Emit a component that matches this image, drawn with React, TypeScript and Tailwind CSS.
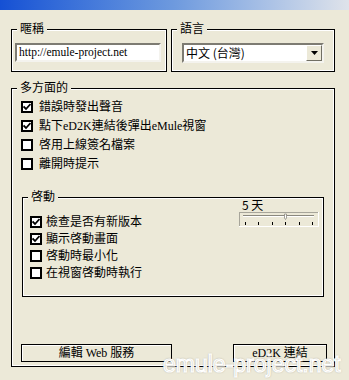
import React from 'react';

const FONT = { fontFamily: '"Liberation Serif", "Noto Sans CJK TC", serif' };

// classic group box: etched black line with the caption sitting on it
const GroupBox: React.FC<{ title: string; className?: string; children?: React.ReactNode }> = ({
  title,
  className = '',
  children,
}) => (
  <div className={'relative border border-black shadow-[inset_0_0_0_1px_#fff] ' + className}>
    <span className="absolute -top-[8px] left-[5px] bg-[#ece9d8] px-[3px] text-[12px] leading-[14px] text-black">
      {title}
    </span>
    {children}
  </div>
);

const CheckBox: React.FC<{ checked?: boolean; label: string; gap: string }> = ({ checked, label, gap }) => (
  <div className={'flex items-center ' + gap}>
    <div className="w-[12px] h-[12px] border-2 border-black bg-white flex items-center justify-center shrink-0">
      {checked && (
        <svg width="8" height="8" viewBox="0 0 8 8">
          <path d="M0.5 3.5 L3 6 L7.5 1" stroke="#000" strokeWidth="1.8" fill="none" />
        </svg>
      )}
    </div>
    <span className="text-[12px] leading-[14px] text-black whitespace-nowrap">{label}</span>
  </div>
);

const Slider: React.FC = () => (
  <svg width="80" height="15" viewBox="0 0 80 15" className="block">
    <rect x="0.5" y="0.5" width="79" height="14" fill="none" stroke="#a7a59a" />
    <line x1="0" y1="14.5" x2="80" y2="14.5" stroke="#fff" />
    <line x1="79.5" y1="0" x2="79.5" y2="15" stroke="#fff" />
    {/* track */}
    <line x1="4" y1="3.5" x2="75" y2="3.5" stroke="#8a887e" />
    <line x1="4" y1="4.5" x2="75" y2="4.5" stroke="#fff" />
    {/* thumb */}
    <path d="M45.5 2 L47.5 2 L47.5 6 L46.5 7.5 L45.5 6 Z" fill="#fff" stroke="#8a887e" strokeWidth="0.8" />
    {[6, 19, 33, 46, 60, 73].map((x) => (
      <line key={x} x1={x + 0.5} y1="10" x2={x + 0.5} y2="13" stroke="#000" />
    ))}
  </svg>
);

const Button: React.FC<{ label: string; width: string }> = ({ label, width }) => (
  <div
    className={
      'h-[18px] border border-black shadow-[inset_1px_1px_0_#fff] bg-[#ece9d8] flex items-center justify-center text-[12px] leading-[14px] text-black ' +
      width
    }
  >
    {label}
  </div>
);

const App: React.FC = () => {
  return (
    <div className="relative w-[349px] h-[380px] bg-[#ece9d8] overflow-hidden select-none" style={FONT}>
      {/* title bar strip */}
      <div className="h-[10px] bg-linear-to-r from-[#1550d4] via-[#6e9ade] to-[#dfe3ea]" />

      <div className="pl-[11px] flex flex-col">
        {/* top row */}
        <div className="mt-[19px] flex gap-[4px]">
          <GroupBox title="暱稱" className="w-[156px] h-[43px] pt-[13px] pl-[3px]">
            <div className="w-[146px] h-[19px] bg-white border-2 border-t-[#7d7b72] border-l-[#7d7b72] border-b-[#f4f3ee] border-r-[#f4f3ee] flex items-center pl-[2px]">
              <span className="text-[11.5px] leading-[13px] text-black">http://emule-project.net</span>
            </div>
          </GroupBox>
          <GroupBox title="語言" className="w-[164px] h-[43px] pt-[13px] pl-[10px]">
            <div className="w-[142px] h-[20px] bg-white border-2 border-t-[#7d7b72] border-l-[#7d7b72] border-b-[#f4f3ee] border-r-[#f4f3ee] flex items-center">
              <span className="pl-[2px] text-[12px] leading-[14px] text-black flex-1" style={{ fontFamily: '"Noto Sans CJK TC", sans-serif' }}>
                中文 (台灣)
              </span>
              <div className="w-[16px] h-[16px] bg-[#ece9d8] border border-t-white border-l-white border-b-[#716f64] border-r-[#716f64] flex items-center justify-center">
                <svg width="7" height="4" viewBox="0 0 7 4">
                  <path d="M0 0 H7 L3.5 4 Z" fill="#000" />
                </svg>
              </div>
            </div>
          </GroupBox>
        </div>

        {/* 多方面的 */}
        <GroupBox title="多方面的" className="mt-[16px] w-[324px] h-[279px] flex flex-col pb-[4px]">
          <div className="pt-[8px] pl-[9px] flex flex-col">
            {[
              { c: true, t: '錯誤時發出聲音' },
              { c: true, t: '點下eD2K連結後彈出eMule視窗' },
              { c: false, t: '啓用上線簽名檔案' },
              { c: false, t: '離開時提示' },
            ].map((r) => (
              <div key={r.t} className="h-[19px] flex items-center">
                <CheckBox checked={r.c} label={r.t} gap="gap-[6px]" />
              </div>
            ))}
          </div>

          <GroupBox title="啓動" className="ml-[10px] mt-[24px] w-[302px] h-[100px] flex justify-between">
            <div className="pt-[15px] pl-[7px] flex flex-col">
              {[
                { c: true, t: '檢查是否有新版本' },
                { c: true, t: '顯示啓動畫面' },
                { c: false, t: '啓動時最小化' },
                { c: false, t: '在視窗啓動時執行' },
              ].map((r) => (
                <div key={r.t} className="h-[17px] flex items-center">
                  <CheckBox checked={r.c} label={r.t} gap="gap-[4px]" />
                </div>
              ))}
            </div>
            <div className="pr-[4px] flex flex-col">
              <span className="ml-[3px] text-[12px] leading-[13px] text-black" style={{ fontFamily: '"Noto Sans CJK TC", sans-serif' }}>
                5 天
              </span>
              <div className="mt-[1px]">
                <Slider />
              </div>
            </div>
          </GroupBox>

          <div className="mt-auto pl-[9px] pr-[7px] flex justify-between">
            <Button label="編輯 Web 服務" width="w-[151px]" />
            <Button label="eD2K 連結" width="w-[94px]" />
          </div>
        </GroupBox>
      </div>

      {/* site watermark */}
      <span
        className="absolute left-[163px] top-[350px] text-[23px] leading-[28px] text-[#dcd9cc] [-webkit-text-stroke:1.2px_#fff] [text-shadow:0_0_2px_#6f6d66] whitespace-nowrap"
        style={{ fontFamily: '"Liberation Sans", Arial, sans-serif' }}
      >
        emule-project.net
      </span>
    </div>
  );
};

export default App;
